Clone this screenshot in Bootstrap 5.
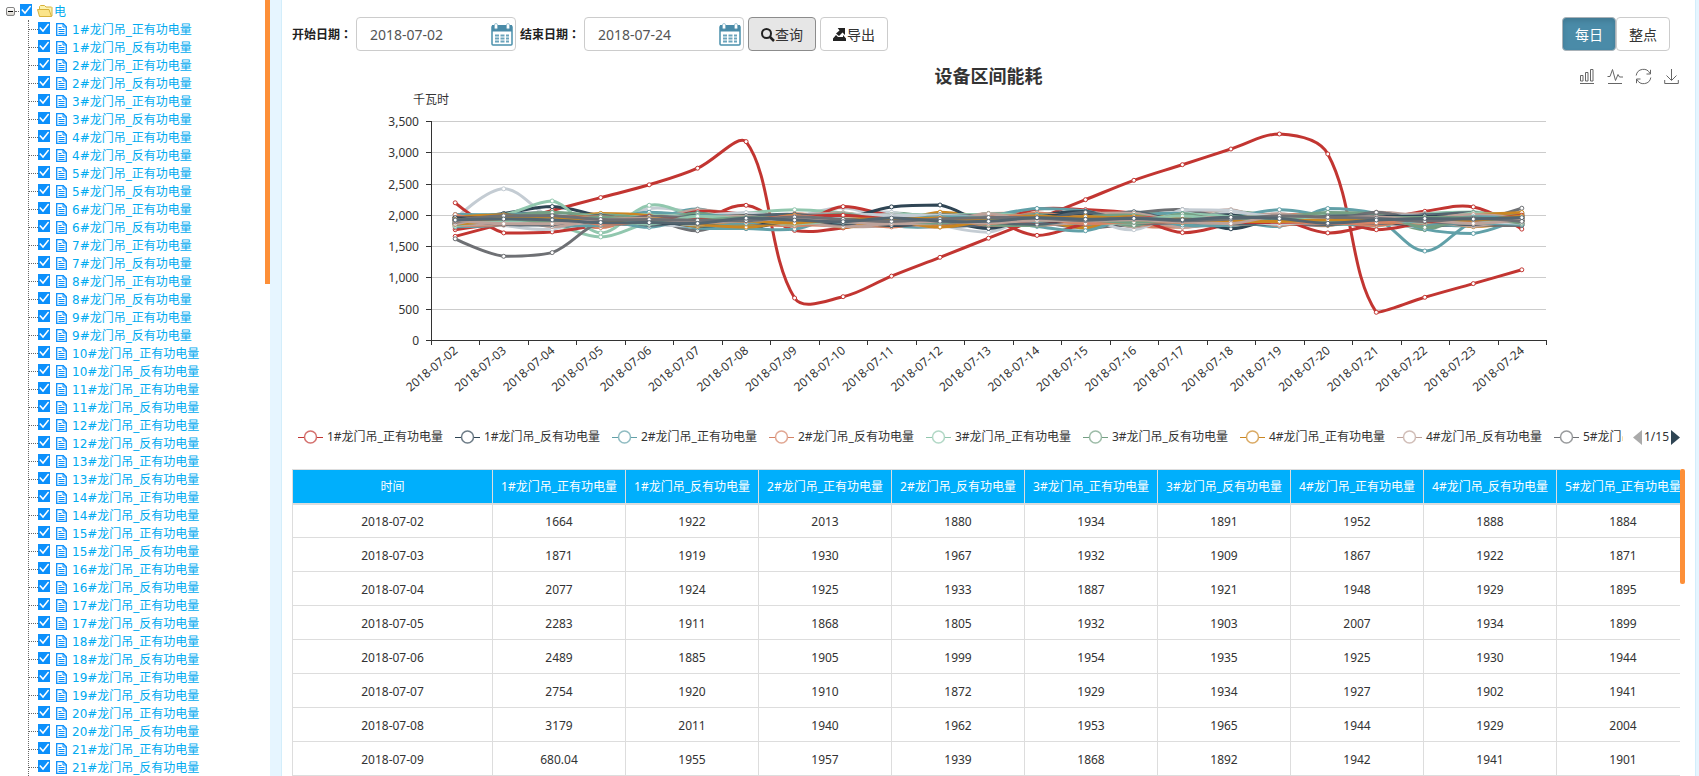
<!DOCTYPE html>
<html lang="zh-CN">
<head>
<meta charset="utf-8">
<meta name="viewport" content="width=device-width, initial-scale=1">
<title>设备区间能耗</title>
<link href="https://cdn.jsdelivr.net/npm/bootstrap@5.3.0/dist/css/bootstrap.min.css" rel="stylesheet">
<style>
  body { height: 100vh; overflow: hidden; background: #e6f5ff; color: #333; font: 12px/18px "Noto Sans", "Noto Sans CJK SC", sans-serif; }

  /* device tree */
  .side { width: 270px; background: #fff; overflow: hidden; }
  .side-thumb { width: 5px; height: 284px; background: #fd8f38; }
  .tree { font-family: "DejaVu Sans", "Noto Sans CJK SC", sans-serif; color: #00aaef; padding-top: 2px; }
  .tree-row { height: 18px; display: flex; align-items: center; white-space: nowrap; }
  .tree-row label span { padding-top: 2px; }
  .tree-sub { margin-left: 28px; border-left: 1px dotted #666; }
  .tree-sub .tree-row::before { content: ""; width: 9px; border-top: 1px dotted #666; }
  .tree-dots { width: 4px; border-top: 1px dotted #666; margin-right: 1px; }
  .tree .form-check-input { width: 12px; height: 12px; margin: 0; border: 0; border-radius: 0; background-color: #0c90fb; background-size: 12px 12px; margin-bottom: 2px;
    background-image: url("data:image/svg+xml,%3csvg xmlns='http://www.w3.org/2000/svg' viewBox='0 0 12 12'%3e%3cpath d='M1.8 5.6L5 9l5.6-7' fill='none' stroke='%23fff' stroke-width='1.5'/%3e%3c/svg%3e"); }
  .tree-sub label { display: flex; align-items: center; gap: 5px; margin-left: 6px; }
  .tree svg { flex: none; display: block; }
  .fold { width: 9px; height: 9px; margin-left: 6px; padding: 0; line-height: 0; border: 1px solid #848484; border-radius: 2px; background: linear-gradient(#fff, #d8d4cc); display: flex; align-items: center; justify-content: center; }
  .fold span { width: 5px; height: 1px; background: #000; }

  /* right panel */
  .panel { margin: 0 3px 0 11px; padding: 17px 10px 0; background: #fff; border: solid #d3eefb; border-width: 0 1px; min-width: 0; overflow: hidden; }
  .bar-label { font-weight: 700; color: #222; width: 64px; white-space: nowrap; padding-top: 1px; }
  .bar-label span { font-family: "Noto Sans CJK TC", sans-serif; }
  .datebox { width: 160px; height: 34px; border: 1px solid #ccc; border-radius: 4px; padding-right: 2px; }
  .datebox input { width: 100%; min-width: 0; border: 0; outline: 0; background: none; padding: 1px 0 0 13px; font-size: 14px; color: #555; }
  .datebox button { border: 0; background: none; padding: 0; line-height: 0; }
  .tool-btn { height: 34px; padding: 2px 11px 0; border: 1px solid #ccc; border-radius: 4px; background: #fff; color: #333; font-size: 14px; line-height: 20px; white-space: nowrap; display: flex; align-items: center; }
  .tool-btn.is-focus { background: #e6e6e6; border-color: #8c8c8c; }
  .tool-btn.is-on { background: #4a8ba8; border-color: #a9b2b8; color: #fff; box-shadow: inset 0 3px 5px rgba(0,0,0,.125); }
  .tool-btn.tool-fix { width: 68px; }
  .mode-pair { margin-right: 15px; }
  .mode-pair .tool-btn { width: 54px; padding-left: 0; padding-right: 0; justify-content: center; }

  .chart-head { display: grid; grid-template-columns: 1fr auto 1fr; height: 30px; margin-top: 10px; align-items: center; }
  .chart-title { font-size: 18px; line-height: 24px; font-weight: 700; margin: 0; color: #333; grid-column: 2; }
  .chart-tools { gap: 12px; padding-right: 6px; }
  .chart-tools button { border: 0; background: none; padding: 0; line-height: 0; }
  .chart-tools svg { fill: none; stroke: #666; }
  #chart { display: block; width: 100%; height: 312px; }
  #chart text { fill: #333; font-size: 12px; }
  .legend-row { height: 20px; margin: 24px 5px 22px 6px; }
  .legend-list { overflow: hidden; gap: 10px; white-space: nowrap; }
  .legend-key { flex: none; width: 147px; display: flex; align-items: center; gap: 4px; }
  .legend-key svg { flex: none; }
  .pager { margin-left: 10px; gap: 2px; }
  .pager button { border: 0; padding: 0; background: none; line-height: 0; }

  .grid-wrap { overflow: hidden; }
  .grid-table { width: 1398px; table-layout: fixed; margin: 0; text-align: center; white-space: nowrap; border-collapse: collapse; color: #333; }
  .grid-table th, .grid-table td { height: 34px; padding: 2px 0 0; vertical-align: middle; border: 1px solid #ddd; }
  .grid-table th { background: #00affc; color: #fff; font-weight: 400; border-bottom-width: 2px; }
  .grid-table tr > :first-child { width: 200px; }
  .grid-thumb { flex: none; width: 5px; height: 115px; border-radius: 2px; background: #fd8f38; }
</style>
<script src="https://cdn.jsdelivr.net/npm/bootstrap@5.3.0/dist/js/bootstrap.bundle.min.js"></script>
</head>
<body class="d-flex">

<aside class="side flex-shrink-0 d-flex justify-content-between">
  <div class="tree">
    <div class="tree-row">
      <button class="fold" type="button" aria-label="收起"><span></span></button>
      <span class="tree-dots"></span>
      <input class="form-check-input" type="checkbox" id="root" checked>
      <label for="root" class="d-flex align-items-center ms-1">
        <svg width="18" height="14" viewBox="0 0 16 14"><path d="M2.500 12V2.500l1-1h4l1.500 1.500h5.500l.5.500V12z" fill="#fdf3b0" stroke="#d8b23c"/><path d="M.5 5.500h11.500L14.500 12.500H2.500z" fill="#fbe48a" stroke="#d8b23c"/></svg>
        <span>电</span>
      </label>
    </div>
    <div class="tree-sub" id="nodes"></div>
  </div>
  <div class="side-thumb"></div>
</aside>

<main class="panel flex-fill">
  <div class="d-flex align-items-center">
    <label class="bar-label" for="from">开始日期<span lang="zh-TW">：</span></label>
    <div class="datebox d-flex align-items-center">
      <input id="from" type="text" value="2018-07-02">
      <button type="button" aria-label="选择开始日期"><svg width="22" height="23"><use href="#cal"/></svg></button>
    </div>
    <label class="bar-label ms-1" for="to">结束日期<span lang="zh-TW">：</span></label>
    <div class="datebox d-flex align-items-center">
      <input id="to" type="text" value="2018-07-24">
      <button type="button" aria-label="选择结束日期"><svg width="22" height="23"><use href="#cal"/></svg></button>
    </div>
    <button type="button" class="tool-btn tool-fix is-focus ms-1">
      <svg width="15" height="15" viewBox="0 0 15 15" class="flex-shrink-0"><circle cx="6.500" cy="5.500" r="4.500" fill="none" stroke="#222" stroke-width="2"/><path d="M10 9l4 4" stroke="#222" stroke-width="2.500"/></svg>查询</button>
    <button type="button" class="tool-btn tool-fix ms-1">
      <svg width="15" height="15" viewBox="0 1 15 15" class="flex-shrink-0" fill="#222"><path d="M5 0h8v8l-2.500-2.500L7 9 4 6.500l3.500-3z"/><path d="M4 8l2 2h5V8l3 3.500V14H1v-2.500z"/></svg>导出</button>
    <div class="mode-pair d-flex ms-auto">
      <button type="button" class="tool-btn is-on">每日</button>
      <button type="button" class="tool-btn">整点</button>
    </div>
  </div>

  <section>
    <div class="chart-head">
      <h2 class="chart-title">设备区间能耗</h2>
      <div class="chart-tools d-flex justify-content-end">
        <button type="button" aria-label="柱状图"><svg width="16" height="17" viewBox="0 0 16 17"><path d="M1.500 7.500h2.500v5.500H1.500zM6.500 4.500H9v8.500H6.500zM11.500 1.500H14v11.500h-2.500zM1 15.500h14"/></svg></button>
        <button type="button" aria-label="折线图"><svg width="16" height="17" viewBox="0 0 16 17"><path d="M.5 8.500h2.500L5.500 1.500l3 11 2.500-6 1.500 2.500H16M1 15.500h14"/></svg></button>
        <button type="button" aria-label="还原"><svg width="17" height="17" viewBox="0 0 17 17"><path d="M1.200 7.500A7.300 7.300 0 0 1 15 5.500M15.800 9.500A7.300 7.300 0 0 1 2 11.500M15.500 1.800V6h-4M1.500 15.200V11h4"/></svg></button>
        <button type="button" aria-label="保存"><svg width="15" height="17" viewBox="0 0 15 17"><path d="M7.500 1v11M2.500 7.500l5 5 5-5M.7 12v3.500h13.600V12"/></svg></button>
      </div>
    </div>
    <svg id="chart" role="img" aria-label="设备区间能耗"></svg>
    <div class="legend-row d-flex align-items-center">
      <div class="legend-list d-flex flex-fill" id="legend"></div>
      <div class="pager d-flex align-items-center flex-shrink-0">
        <button type="button" aria-label="上一页"><svg width="9" height="15"><path d="M9 0v15L0 7.500z" fill="#aaa"/></svg></button>
        <span>1/15</span>
        <button type="button" aria-label="下一页"><svg width="9" height="15"><path d="M0 0v15l9-7.500z" fill="#2f4554"/></svg></button>
      </div>
    </div>
  </section>

  <div class="d-flex">
    <div class="grid-wrap flex-fill">
      <table class="grid-table"><thead><tr id="head"></tr></thead><tbody id="rows"></tbody></table>
    </div>
    <div class="grid-thumb"></div>
  </div>
</main>

<svg width="0" height="0" class="position-absolute" aria-hidden="true">
  <symbol id="cal" viewBox="0 0 22 23">
    <rect x="1" y="3" width="20" height="19" rx="1" fill="#fff" stroke="#4a90ac" stroke-width="1.500"/>
    <path d="M1 2h20v6.500H1z" fill="#4a8ba8"/>
    <rect x="3.500" y=".5" width="3" height="5.500" rx="1.500" fill="#fff" stroke="#7fb0c4" stroke-width=".7"/>
    <rect x="15.500" y=".5" width="3" height="5.500" rx="1.500" fill="#fff" stroke="#7fb0c4" stroke-width=".7"/>
    <path d="M4 12.500h14M4 15.500h14M4 18.500h14" stroke="#6ba3bb" stroke-width="2" stroke-dasharray="4 1.500"/>
  </symbol>
</svg>

<script>
const palette = ['#c23531','#2f4554','#61a0a8','#d48265','#91c7ae','#749f83','#ca8622','#bda29a','#6e7074','#546570','#c4ccd3'];
const dates = Array.from({length: 23}, (_, i) => '2018-07-' + String(i + 2).padStart(2, '0'));
const names = [];
for (let n = 1; n <= 21; n++) names.push(n + '#龙门吊_正有功电量', n + '#龙门吊_反有功电量');

document.getElementById('nodes').innerHTML = names.map((n, i) =>
  `<div class="tree-row"><input class="form-check-input" type="checkbox" id="n${i}" checked><label for="n${i}"><svg width="11" height="13" viewBox="0 0 11 13"><path d="M.7.7h6.500l3.100 3.100v8.500H.7z" fill="#fff" stroke="#0c90fb" stroke-width="1.300"/><path d="M7 .7v3.300h3.300M2.500 4.500h3M2.500 6.500h6M2.500 8.500h6M2.500 10.500h6" fill="none" stroke="#0c90fb"/></svg><span>${n}</span></label></div>`).join('');

const shown = names.slice(0, 9);
document.getElementById('legend').innerHTML = shown.map((n, i) =>
  `<div class="legend-key"><svg width="25" height="14" fill="none" stroke="${palette[i]}"><path d="M0 7.500h6M19 7.500h6" /><circle cx="12.500" cy="7" r="6" stroke-width="1.500" opacity=".7"/></svg><span>${n}</span></div>`).join('');
document.getElementById('head').innerHTML = '<th scope="col">时间</th>' + shown.map(n => `<th scope="col">${n}</th>`).join('');

const table = [
  [1664,1922,2013,1880,1934,1891,1952,1888,1884],
  [1871,1919,1930,1967,1932,1909,1867,1922,1871],
  [2077,1924,1925,1933,1887,1921,1948,1929,1895],
  [2283,1911,1868,1805,1932,1903,2007,1934,1899],
  [2489,1885,1905,1999,1954,1935,1925,1930,1944],
  [2754,1920,1910,1872,1929,1934,1927,1902,1941],
  [3179,2011,1940,1962,1953,1965,1944,1929,2004],
  [680.04,1955,1957,1939,1868,1892,1942,1941,1901]
];
document.getElementById('rows').innerHTML = table.map((r, i) => `<tr><td>${dates[i]}</td>${r.map(v => `<td>${v}</td>`).join('')}</tr>`).join('');

/* readings that leave the common band, by line: {day index: value} */
const peaks = {
  11: {0:2200,1:1720,2:1735,3:1850,6:2160,7:1760,8:1800,12:2100,13:2090,14:2030,21:2135,20:2065,22:1780},
  22: {0:1770,1:1880,5:2060,6:2010,8:2140,9:2000,12:1680,13:1860,15:1725,16:1860,18:1720,19:1850},
  33: {0:1800,1:2000,19:1770},
  12: {1:2030,2:2140,3:1990,6:1790},
  23: {9:2135,10:2165,11:1870},
  34: {11:1790,16:1785,13:2060},
  10: {0:1940,1:2425,2:1960,4:2110,5:2040,8:2120},
  21: {1:1840,2:1780,9:2050,11:1730,14:1770,15:2090,16:2080},
  4: {2:1860,3:1655,4:1880},
  15: {0:1960,1:2010,2:2230,3:1720,4:2160,5:2000,6:2040,7:2090,8:2040},
  19: {0:1625,1:1345,2:1405,3:1900,5:1755,15:2090,22:2115},
  13: {5:2100,6:1900,12:2110,13:2070,17:2090,18:1990,19:1940,20:1430,21:1900,22:2040},
  24: {5:1800,6:1790,7:1780,13:1755,17:1825,18:2110,19:2030,20:1780,21:1710,22:1960},
  17: {14:2040,5:1830,13:1800},
  16: {16:2080,20:1770},
  18: {16:2090,19:2050,5:2090}
};
const lineColors = {10: 10, 15: 4, 19: 8, 13: 2};
let seed = 7;
const rnd = () => (seed = (seed * 16807) % 2147483647) / 2147483647;
const series = [];
for (let k = 0; k < 76; k++) {
  const spread = k > 64 ? 80 : k % 11 ? 130 : 70;
  const vals = dates.map((_, i) => k < 9 && i < 8 ? table[i][k] : 1930 + (rnd() + rnd() - 1) * spread);
  for (const i in peaks[k] || {}) vals[i] = peaks[k][i];
  series.push(vals);
}
series[0] = [1664,1871,2077,2283,2489,2754,3179,680,700,1030,1330,1635,1940,2250,2560,2810,3060,3300,2980,450,690,910,1130];

const SMOOTH = .36;
function smoothPath(p) {
  const ys = p.map(q => q[1]), lo = Math.min(...ys), hi = Math.max(...ys);
  const clamp = y => Math.max(lo, Math.min(hi, y));
  let d = `M${p[0][0]} ${p[0][1]}`, cp = p[0];
  for (let i = 1; i < p.length; i++) {
    const a = p[i - 1], b = p[i], c = p[i + 1];
    let c1 = b, next = b;
    if (c) {
      const l0 = Math.hypot(b[0] - a[0], b[1] - a[1]), l1 = Math.hypot(c[0] - b[0], c[1] - b[1]);
      const r = l1 / (l0 + l1), vx = (c[0] - a[0]) * SMOOTH, vy = (c[1] - a[1]) * SMOOTH;
      c1 = [b[0] - vx * (1 - r), clamp(b[1] - vy * (1 - r))];
      next = [b[0] + vx * r, clamp(b[1] + vy * r)];
    }
    d += `C${cp[0]} ${cp[1]} ${c1[0]} ${c1[1]} ${b[0]} ${b[1]}`;
    cp = next;
  }
  return d;
}

function draw() {
  const svg = document.getElementById('chart'), W = svg.clientWidth;
  const L = Math.round(W * .1), R = Math.round(W * .9), T = 30, B = 249, step = (R - L) / dates.length;
  let s = `<text x="${L}" y="13" text-anchor="middle">千瓦时</text>`;
  for (let i = 0; i <= 7; i++) {
    const y = Math.round(B - (B - T) * i / 7) + .5;
    s += `<path d="M${L} ${y}H${R}" stroke="${i ? '#ccc' : '#333'}"/><path d="M${L - 5} ${y}h5" stroke="#333"/>`;
    s += `<text x="${L - 12}" y="${y + 4}" text-anchor="end">${(i * 500).toLocaleString('en-US')}</text>`;
  }
  s += `<path d="M${L + .5} ${T}V${B}" stroke="#333"/>`;
  dates.forEach((d, i) => {
    const x = L + step * (i + .5);
    s += `<text text-anchor="end" transform="translate(${x} ${B + 8}) rotate(-40)" y="5">${d}</text>`;
  });
  for (let i = 0; i <= dates.length; i++) s += `<path d="M${Math.round(L + step * i) + .5} ${B}v5" stroke="#333"/>`;
  series.forEach((v, k) => {
    const color = palette[lineColors[k] ?? k % 11];
    const p = v.map((y, i) => [+(L + step * (i + .5)).toFixed(1), +(B + .5 - (B - T) * y / 3500).toFixed(1)]);
    s += `<path d="${smoothPath(p)}" fill="none" stroke="${color}" stroke-width="3"/>`;
    s += p.map(q => `<circle cx="${q[0]}" cy="${q[1]}" r="2" fill="#fff" stroke="${color}"/>`).join('');
  });
  svg.innerHTML = s;
}
draw();
addEventListener('resize', draw);
</script>
</body>
</html>
